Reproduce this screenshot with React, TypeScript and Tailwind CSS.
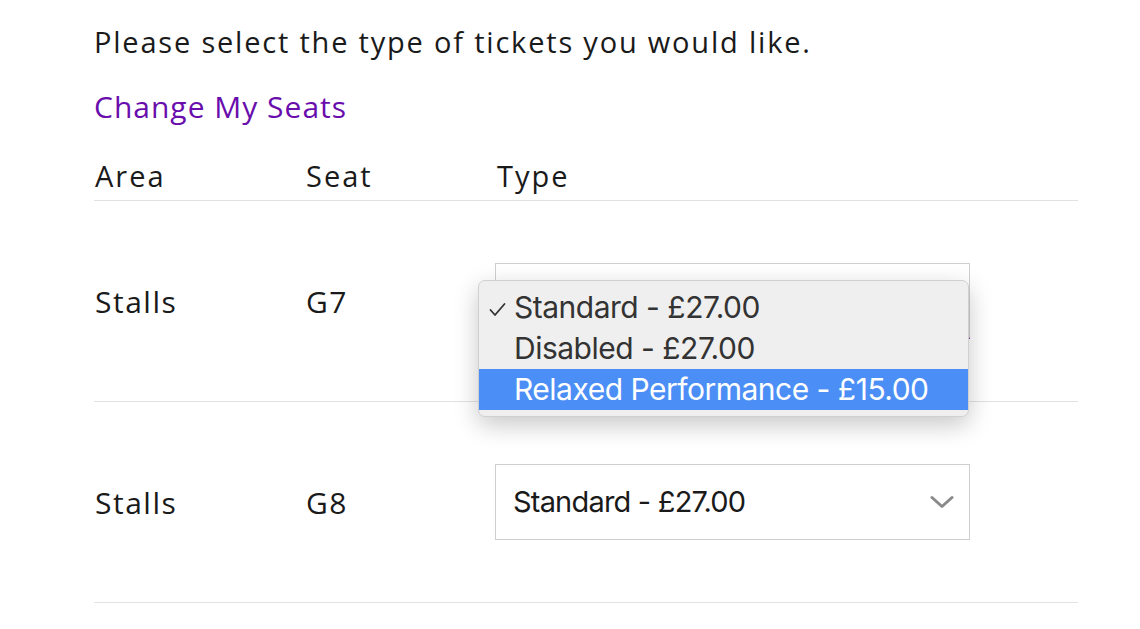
import { useState } from 'react'

const rows = [
  { area: 'Stalls', seat: 'G7', open: true },
  { area: 'Stalls', seat: 'G8', open: false },
]

const options = ['Standard - £27.00', 'Disabled - £27.00', 'Relaxed Performance - £15.00']

function Chevron() {
  return (
    <svg width="24" height="14" viewBox="0 0 24 14" fill="none">
      <path d="M2 2.5 L12 11.5 L22 2.5" stroke="#8a8a8a" strokeWidth="3" strokeLinecap="round" strokeLinejoin="round" />
    </svg>
  )
}

function Check() {
  return (
    <svg width="17" height="15" viewBox="0 0 17 15" fill="none">
      <path d="M1.5 8 L6 13 L15.5 2" stroke="#333333" strokeWidth="1.8" strokeLinecap="round" strokeLinejoin="round" />
    </svg>
  )
}

function TypeSelect({ open }: { open: boolean }) {
  const [hover] = useState(2)
  return (
    <div
      className={`relative w-[475px] h-[76px] border border-[#cfcfcf] bg-white flex items-center pl-[17px] pr-[15px] ${
        open ? 'border-b-2 border-b-[#6a0dad]' : ''
      }`}
    >
      <span className="flex-1 text-[29px] text-[#1a1a1a] tracking-[-0.8px]">{options[0]}</span>
      <Chevron />
      {open && (
        <div className="absolute left-[-18px] top-[16px] w-[491px] rounded-[7px] border border-[#d0d0d0] bg-[#efefef] py-[6px] shadow-[0_8px_24px_rgba(0,0,0,0.22)]">
          {options.map((o, i) => (
            <div
              key={o}
              className={`h-[41px] flex items-center text-[30px] tracking-[-0.5px] ${
                i === hover ? 'bg-[#4b8ef6] text-white' : 'text-[#333333]'
              }`}
            >
              <span className="w-[35px] pl-[10px] flex items-center pt-[3px]">{i === 0 ? <Check /> : null}</span>
              <span>{o}</span>
            </div>
          ))}
        </div>
      )}
    </div>
  )
}

export default function App() {
  return (
    <div
      className="bg-white min-h-screen pl-[94px] pr-[62px] pt-[23px] text-[#1a1a1a]"
      style={{ fontFamily: '"Open Sans", sans-serif' }}
    >
      <p className="text-[29px] leading-[38px] tracking-[1.8px] whitespace-nowrap">
        Please select the type of tickets you would like.
      </p>
      <a href="#" className="block mt-[27px] text-[30px] leading-[38px] tracking-[1px] text-[#6a0dad]">
        Change My Seats
      </a>
      <div className="mt-[36px] flex h-[39px] border-b border-[#e2e2e2] text-[29px] leading-[28px] font-medium tracking-[2px]">
        <div className="w-[212px] pl-[1px]">Area</div>
        <div className="w-[191px]">Seat</div>
        <div>Type</div>
      </div>
      {rows.map((r) => (
        <div key={r.seat} className="flex items-center h-[201px] border-b border-[#e2e2e2] text-[30px] tracking-[1.5px]">
          <div className="w-[212px] pl-[1px]">{r.area}</div>
          <div className="w-[189px]">{r.seat}</div>
          <div style={{ fontFamily: 'Inter, "Noto Sans", sans-serif' }}>
            <TypeSelect open={r.open} />
          </div>
        </div>
      ))}
    </div>
  )
}
